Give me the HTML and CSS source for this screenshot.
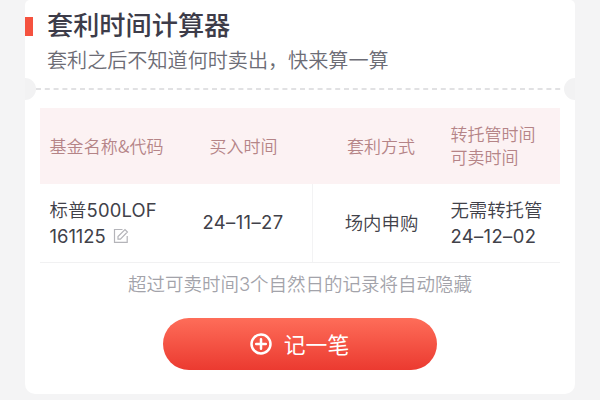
FILE: index.html
```html
<!DOCTYPE html>
<html lang="zh-CN">
<head>
<meta charset="utf-8">
<title>套利时间计算器</title>
<link rel="stylesheet" href="styles.css">
</head>
<body>
<main class="card">
  <header class="head">
    <span class="marker"></span>
    <h1 class="title">套利时间计算器</h1>
  </header>
  <p class="subtitle">套利之后不知道何时卖出，快来算一算</p>
  <div class="tear">
    <span class="notch"></span>
    <svg class="dashes" width="528" height="2"><line x1="0" y1="1" x2="528" y2="1"/></svg>
    <span class="notch notch-right"></span>
  </div>
  <section class="table">
    <div class="row row-head">
      <div class="cell name"><span class="fund-head">基金名称&amp;代码</span></div>
      <div class="cell mid">买入时间</div>
      <div class="cell mode">套利方式</div>
      <div class="cell last">转托管时间<br>可卖时间</div>
    </div>
    <div class="row row-body">
      <div class="cell name">
        <div><span class="line-a">标普<span class="num">500LOF</span></span></div>
        <div class="code"><span class="num">161125</span>
          <svg class="edit" width="16" height="16" viewBox="0 0 16 16"><path d="M9.5 1.5H1.5V14.3H14.2V8M5 11.1V8.6L12 1.6L14.4 4L7.4 11.1Z"/></svg>
        </div>
      </div>
      <div class="cell mid"><span class="num date">24–11–27</span></div>
      <div class="cell mode">场内申购</div>
      <div class="cell last">无需转托管<br><span class="num date">24–12–02</span></div>
    </div>
  </section>
  <p class="note">超过可卖时间<span class="num">3</span>个自然日的记录将自动隐藏</p>
  <button class="add" type="button">
    <svg width="22" height="22" viewBox="0 0 22 22"><circle cx="11" cy="11" r="9.5"/><path d="M11 6.2V15.8M6.2 11H15.8"/></svg>
    <span>记一笔</span>
  </button>
</main>
</body>
</html>
```
FILE: styles.css
```css
* { box-sizing: border-box; }
body {
  margin: 0;
  height: 400px;
  overflow: hidden;
  background: #f4f4f5;
  font-family: "Noto Sans CJK SC", sans-serif;
  font-weight: 350;
}
.card {
  width: 550px;
  height: 394px;
  margin-left: 25px;
  background: #fff;
  border-radius: 5px 5px 10px 10px;
  display: flex;
  flex-direction: column;
}
.head {
  display: flex;
  align-items: center;
  height: 36px;
  margin-top: 6px;
}
.marker {
  width: 8px;
  height: 19px;
  margin-top: 5px;
  background: #f5523f;
}
.title {
  margin: 0 0 0 14px;
  font-size: 26.2px;
  line-height: 36px;
  font-weight: 500;
  color: #3d3c49;
  white-space: nowrap;
}
.subtitle {
  margin: 4px 0 0 22px;
  font-size: 20.1px;
  line-height: 28px;
  color: #6c6c75;
  white-space: nowrap;
}
.tear {
  display: flex;
  align-items: center;
  justify-content: space-between;
  height: 22px;
  margin-top: 4px;
}
.notch {
  width: 11px;
  height: 22px;
  background: #f2f2f3;
  border-radius: 0 11px 11px 0;
}
.notch-right { border-radius: 11px 0 0 11px; }
.dashes line {
  stroke: #d8d8da;
  stroke-width: 1.3;
  stroke-dasharray: 5 3.8;
}
.table { margin: 8px 15px 0; }
.row {
  display: grid;
  grid-template-columns: 134px 138px 138px 110px;
}
.row-head {
  height: 76px;
  background: #fcf2f3;
  color: #b58487;
  font-size: 17px;
  line-height: 22.6px;
}
.row-body {
  height: 79px;
  border-bottom: 1px solid #f1f1f2;
  color: #414149;
  font-size: 18.4px;
  line-height: 25.5px;
}
.cell {
  display: flex;
  flex-direction: column;
  justify-content: center;
  white-space: nowrap;
}
.name { padding-left: 9.5px; }
.fund-head { letter-spacing: 0.1px; }
.mid { align-items: center; }
.mode { align-items: center; }
.row-head .mid { padding-left: 1px; }
.last { display: block; align-self: center; padding-left: 0.4px; }
.row-body .mode { border-left: 1px solid #f3f3f4; }
.num { font-family: Inter, "Noto Sans CJK SC", sans-serif; font-weight: 400; }
.line-a { letter-spacing: 0.15px; }
.date { letter-spacing: 0.4px; }
.code { display: flex; align-items: center; }
.edit {
  margin-left: 7px;
  fill: none;
  stroke: #b4b4b9;
  stroke-width: 1.2;
}
.note {
  margin: 6px 0 0;
  text-align: center;
  font-size: 18.5px;
  line-height: 28px;
  color: #a3a3aa;
  white-space: nowrap;
}
.note .num { font-weight: 300; }
.add {
  width: 274px;
  height: 52px;
  margin: 20px 0 0 138px;
  padding: 0 1px 0 0;
  border: 0;
  border-radius: 26px;
  background: linear-gradient(#fe6d59, #eb3a30);
  color: #fff;
  font: 400 21.8px/32px "Noto Sans CJK SC", sans-serif;
  display: flex;
  align-items: center;
  justify-content: center;
  gap: 12px;
}
.add svg {
  fill: none;
  stroke: #fff;
  stroke-width: 2.5;
  stroke-linecap: round;
}
```
